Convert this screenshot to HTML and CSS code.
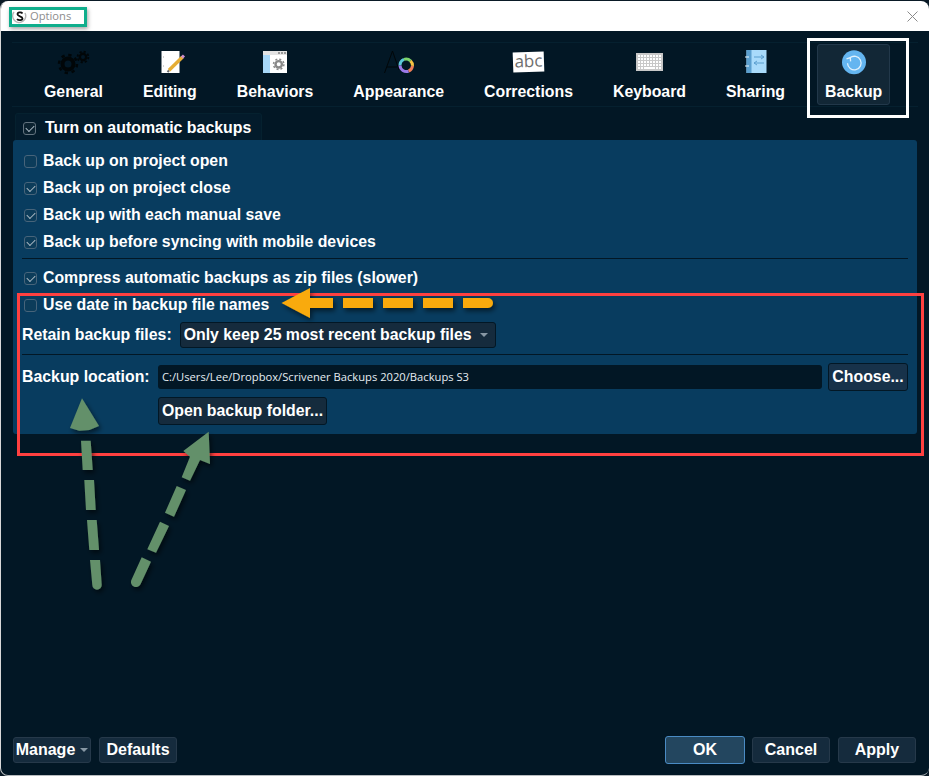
FILE: index.html
```html
<!DOCTYPE html>
<html lang="en">
<head>
<meta charset="utf-8">
<title>Options</title>
<link rel="stylesheet" href="styles.css">
</head>
<body>
<div class="window">
  <header class="titlebar">
    <svg class="app-icon" width="15" height="15" viewBox="0 0 15 15"><path d="M2 3a6.500 6.500 0 1 0 11 1" fill="none" stroke="#b5b5b5" stroke-width="1.500"/><path d="M10.500 4.500C9.500 3 5.500 3 5.500 5.300c0 2.300 5 1.700 5 4.200 0 2.100-4.200 2-5.500.7" fill="none" stroke="#111" stroke-width="1.800"/></svg>
    <span class="title">Options</span>
    <svg class="close" width="11" height="11" viewBox="0 0 11 11"><path d="M.5.5l10 10M10.500.5l-10 10" stroke="#8a8a8a" stroke-width="1" fill="none"/></svg>
  </header>
  <main class="content">
    <nav class="toolbar">
      <div class="tab">
        <svg class="tab-icon" width="40" height="30" viewBox="0 0 40 30">
          <g fill="none" stroke="#010608">
            <circle cx="14" cy="14" r="5.500" stroke-width="4"/>
            <circle cx="14" cy="14" r="9" stroke-width="2.400" stroke-dasharray="3.300 3.770"/>
            <circle cx="29" cy="7" r="3.200" stroke-width="2.400"/>
            <circle cx="29" cy="7" r="5.400" stroke-width="1.800" stroke-dasharray="2.200 2.040"/>
          </g>
        </svg>
        <span class="tab-label">General</span>
      </div>
      <div class="tab">
        <svg class="tab-icon" width="30" height="30" viewBox="0 0 30 30">
          <rect x="6.500" y="1" width="18" height="22" fill="#fff"/>
          <path d="M8 7h1M8 16h1" stroke="#aaa"/>
          <path d="M14 20.300L27.500 7" stroke="#e5ad35" stroke-width="3.400"/>
          <path d="M27 7.500l2-2" stroke="#cf8fd0" stroke-width="3"/>
          <path d="M12.500 22l1.500-1.500" stroke="#666" stroke-width="2"/>
        </svg>
        <span class="tab-label">Editing</span>
      </div>
      <div class="tab">
        <svg class="tab-icon" width="24" height="30" viewBox="0 0 24 30">
          <rect y="1" width="24" height="22" fill="#fff"/>
          <rect y="1" width="24" height="4" fill="#e3e3e3"/>
          <rect x="15" y="2" width="2" height="2" fill="#999"/><rect x="18" y="2" width="2" height="2" fill="#999"/><rect x="21" y="2" width="2" height="2" fill="#999"/>
          <rect y="5" width="7" height="18" fill="#a8d8f8"/>
          <circle cx="15.700" cy="14.300" r="3.200" fill="none" stroke="#8a8a8a" stroke-width="2.400"/>
          <circle cx="15.700" cy="14.300" r="5.200" fill="none" stroke="#8a8a8a" stroke-width="1.500" stroke-dasharray="2 2.080"/>
        </svg>
        <span class="tab-label">Behaviors</span>
      </div>
      <div class="tab">
        <svg class="tab-icon" width="34" height="30" viewBox="0 0 34 30">
          <path d="M2.500 23L10.500 1l6.500 19M5 17h10" fill="none" stroke="#010608" stroke-width="1"/>
          <g fill="none" stroke-width="3" transform="translate(-1 -5.500)">
            <path d="M19 21a6.500 6.500 0 0 1 4-6.100" stroke="#5bc8d8"/>
            <path d="M23 14.900a6.500 6.500 0 0 1 6.500 1.500" stroke="#7ed36a"/>
            <path d="M29.500 16.400a6.500 6.500 0 0 1 2 5" stroke="#f5c342"/>
            <path d="M31.500 21.400a6.500 6.500 0 0 1-4 5.300" stroke="#ef7d58"/>
            <path d="M27.500 26.700a6.500 6.500 0 0 1-8.500-5.700" stroke="#9c7ae8"/>
          </g>
        </svg>
        <span class="tab-label">Appearance</span>
      </div>
      <div class="tab">
        <span class="abc">abc</span>
        <span class="tab-label">Corrections</span>
      </div>
      <div class="tab">
        <svg class="tab-icon" width="27" height="30" viewBox="0 0 27 30">
          <rect y="3" width="27" height="18" fill="#c8c8c8"/>
          <g stroke="#fff" stroke-width="2" stroke-dasharray="2 1" fill="none">
            <path d="M2 6h23M2 9h23M2 12h23M2 15h23"/>
            <path d="M8 18h11" stroke-dasharray="none"/>
            <path d="M2 18h5M20 18h5"/>
          </g>
        </svg>
        <span class="tab-label">Keyboard</span>
      </div>
      <div class="tab">
        <svg class="tab-icon" width="22" height="30" viewBox="0 0 22 30">
          <rect x="1.500" y="0" width="20" height="23" fill="#a9dbfb"/>
          <rect x="1.500" y="0" width="5" height="23" fill="#5b9fcf"/>
          <path d="M0 7h4M0 16h4" stroke="#e8f4fb"/>
          <path d="M9 7h10M16 5l3 2-3 2M19 13H9M12 11l-3 2 3 2" fill="none" stroke="#5b9fcf"/>
        </svg>
        <span class="tab-label">Sharing</span>
      </div>
      <div class="tab tab-active">
        <svg class="tab-icon" width="24" height="30" viewBox="0 0 24 30">
          <circle cx="12" cy="12.300" r="12" fill="#64b5f0"/>
          <path d="M8 7.800A6.800 6.800 0 1 1 5.500 13.300" fill="none" stroke="#dff1fd" stroke-width="1.300"/>
          <path d="M4.500 8.800l3.800-1.200.3 3.800" fill="none" stroke="#dff1fd" stroke-width="1.300"/>
        </svg>
        <span class="tab-label">Backup</span>
      </div>
    </nav>

    <div class="legend">
      <span class="check check-on check-legend"></span>
      <span>Turn on automatic backups</span>
    </div>
    <section class="panel">
      <div class="row"><span class="check"></span><span>Back up on project open</span></div>
      <div class="row"><span class="check check-on"></span><span>Back up on project close</span></div>
      <div class="row"><span class="check check-on"></span><span>Back up with each manual save</span></div>
      <div class="row"><span class="check check-on"></span><span>Back up before syncing with mobile devices</span></div>
      <hr class="rule rule-first">
      <div class="row"><span class="check check-on"></span><span>Compress automatic backups as zip files (slower)</span></div>
      <div class="row"><span class="check"></span><span>Use date in backup file names</span></div>
      <div class="retain">
        <span>Retain backup files:</span>
        <span class="combo">Only keep 25 most recent backup files<span class="caret"></span></span>
      </div>
      <hr class="rule rule-second">
      <div class="location">
        <span class="location-label">Backup location:</span>
        <span class="path">C:/Users/Lee/Dropbox/Scrivener Backups 2020/Backups S3</span>
        <span class="btn btn-choose">Choose...</span>
      </div>
      <span class="btn btn-open">Open backup folder...</span>
    </section>

    <footer class="footer">
      <span class="btn btn-foot">Manage<span class="caret caret-small"></span></span>
      <span class="btn btn-foot btn-defaults">Defaults</span>
      <span class="footer-gap"></span>
      <span class="btn btn-foot btn-ok">OK</span>
      <span class="btn btn-foot">Cancel</span>
      <span class="btn btn-foot btn-apply">Apply</span>
    </footer>
  </main>

  <div class="mark mark-title"></div>
  <div class="mark mark-tab"></div>
  <div class="mark mark-red"></div>
  <svg class="arrows" width="929" height="776" viewBox="0 0 929 776">
    <defs>
      <filter id="sh" x="-20%" y="-20%" width="140%" height="140%"><feDropShadow dx="2" dy="3" stdDeviation="2.500" flood-color="#000" flood-opacity=".55"/></filter>
    </defs>
    <g filter="url(#sh)">
      <path d="M281.500 303L310 288V318Z" fill="#f9aa08"/>
      <path d="M310 298h23v10h-23zM343 298h30v10h-30zM383 298h30v10h-30zM423 298h30v10h-30zM463 298h25a5 5 0 0 1 0 10h-25z" fill="#f9aa08"/>
      <path d="M82 398.300L70 428l9.300 2.700 10-.7L99 426Z" fill="#64906a"/>
      <path d="M81 440.700h9.700l2 29.300h-10ZM84.300 480H94l1.700 30H86ZM87 520h9.700l2.300 30h-9.700ZM90 560h10l1.700 25a4.700 4.700 0 0 1-9.400 0Z" fill="#64906a"/>
      <path d="M208.700 431.700L183.300 451l6.700 5.700-8.300 20.600 8.300 3.400L200 460l10 4Z" fill="#64906a"/>
      <path d="M176.700 486l9.300 4L174 516.700l-9-4ZM160 521.700l9 4.300-13 26.700-8.700-3.400ZM141.700 557.300l9.300 4.400-10.500 22.500a5 5 0 0 1-9-4.400Z" fill="#64906a"/>
    </g>
  </svg>
</div>
</body>
</html>
```
FILE: styles.css
```css
* { box-sizing: border-box; }
html, body { margin: 0; padding: 0; }
body {
  width: 929px;
  height: 776px;
  background: #0a1a26;
  overflow: hidden;
  font-family: "Liberation Sans", Arial, sans-serif;
  font-weight: 700;
  font-size: 16px;
  color: #fff;
}
.window {
  position: relative;
  width: 929px;
  height: 775px;
  margin-top: 1px;
  display: flex;
  flex-direction: column;
  border-radius: 8px;
  overflow: hidden;
  background: #021725;
  border-left: 1px solid #d8d8d8;
  border-bottom: 1px solid #b8bcbf;
}
.titlebar {
  flex: none;
  height: 30px;
  background: #fff;
  display: flex;
  align-items: center;
  padding: 0 11px;
  gap: 3px;
}
.app-icon { flex: none; }
.title {
  font-family: "Open Sans", sans-serif;
  font-weight: 400;
  font-size: 11.200px;
  color: #8d8d8d;
  flex: 1;
  margin-top: -1px;
}
.close { flex: none; }
.content {
  flex: 1;
  display: flex;
  flex-direction: column;
  padding: 11px 11px 0;
  min-height: 0;
}
.toolbar {
  flex: none;
  height: 65px;
  display: flex;
  gap: 24px;
  padding: 1px 0 0 24px;
  border: 1px solid #05202f;
  border-width: 1px 0;
}
.tab {
  height: 61px;
  padding: 0 7px;
  display: flex;
  flex-direction: column;
  align-items: center;
  border: 1px solid transparent;
  border-radius: 3px;
}
.tab-active {
  background: #122736;
  border-color: #22384a;
}
.tab-icon {
  display: block;
  flex: none;
  height: 30px;
  margin-top: 5px;
}
.tab-label {
  margin-top: 3px;
  line-height: 18px;
  white-space: nowrap;
  font-size: 15.850px;
}
.abc {
  flex: none;
  display: block;
  width: 31px;
  height: 20px;
  margin-top: 7px;
  margin-bottom: 8px;
  background: #fff;
  color: #6e6e6e;
  font-family: "Open Sans", sans-serif;
  font-weight: 400;
  font-size: 17px;
  line-height: 18px;
  text-align: center;
  transform: rotate(-2deg);
}
.legend {
  flex: none;
  width: 247px;
  height: 27px;
  margin: 6px 0 0 3px;
  padding: 2px 0 0 7px;
  display: flex;
  align-items: center;
  gap: 9px;
  background: #031b2b;
  border: 1px solid #05212f;
  border-bottom: 0;
  border-radius: 3px 3px 0 0;
  font-size: 15.900px;
}
.panel {
  flex: none;
  height: 294px;
  width: 904px;
  margin-left: 1px;
  padding: 7px 9px 0;
  background: #083c5f;
  border-radius: 3px;
  display: flex;
  flex-direction: column;
  align-items: stretch;
  font-size: 15.850px;
}
.row {
  height: 27px;
  display: flex;
  align-items: center;
  gap: 6px;
  padding-left: 2px;
}
.check {
  position: relative;
  flex: none;
  width: 13px;
  height: 13px;
  border: 1px solid #47647a;
  border-radius: 3px;
  background: #0c3c5a;
  margin-top: 1px;
}
.check-on::after {
  content: "";
  position: absolute;
  left: 2px;
  top: 2px;
  width: 7px;
  height: 4px;
  border-left: 1.500px solid #a9b8c3;
  border-bottom: 1.500px solid #a9b8c3;
  transform: rotate(-45deg);
}
.check-legend {
  background: #0b2230;
  border-color: #62727e;
}
.rule {
  width: 100%;
  margin: 0;
  border: 0;
  border-top: 1px solid #021725;
}
.rule-first { margin: 3px 0 5px; }
.rule-second { margin: 7px 0 8px; }
.retain {
  margin-top: 4px;
  height: 25px;
  display: flex;
  align-items: center;
  gap: 8px;
}
.combo {
  width: 316px;
  height: 26px;
  padding: 0 0 0 3px;
  display: flex;
  align-items: center;
  justify-content: space-between;
  background: #152b3d;
  border: 1px solid #021725;
  border-radius: 3px;
  white-space: nowrap;
}
.caret {
  width: 0;
  height: 0;
  margin-right: 7px;
  margin-left: 4px;
  border: 4px solid transparent;
  border-top: 4px solid #8797a4;
  border-bottom: 0;
}
.caret-small { margin: 0 0 0 5px; }
.location {
  height: 28px;
  display: flex;
  align-items: center;
}
.location-label {
  width: 136px;
  flex: none;
  margin-top: -1px;
}
.path {
  flex: 1;
  height: 24px;
  margin-right: 6px;
  padding-left: 4px;
  background: #021725;
  border-radius: 3px;
  font-family: "Open Sans", sans-serif;
  font-weight: 400;
  font-size: 11.200px;
  line-height: 24px;
  color: #e6edf2;
  white-space: nowrap;
}
.btn {
  display: inline-flex;
  align-items: center;
  justify-content: center;
  background: #152b3d;
  border: 1px solid #26394a;
  border-radius: 3px;
  white-space: nowrap;
}
.btn-choose {
  flex: none;
  width: 80px;
  height: 28px;
  border-color: #021725;
  background: #17324a;
}
.btn-open {
  align-self: flex-start;
  width: 169px;
  height: 28px;
  margin: 6px 0 0 136px;
  border-color: #021725;
}
.footer {
  flex: none;
  margin-top: auto;
  height: 28px;
  margin-bottom: 11px;
  display: flex;
  align-items: center;
  gap: 7px;
  padding: 0 2px 0 1px;
}
.btn-foot {
  width: 78px;
  height: 26px;
}
.btn-defaults { margin-left: 1px; }
.btn-apply { margin-left: 1px; }
.footer-gap { flex: 1; }
.btn-ok {
  width: 80px;
  height: 28px;
  background: #23465f;
  border-color: #4a8bc4;
}
.mark {
  position: absolute;
  pointer-events: none;
}
.mark-title {
  left: 8px;
  top: 6px;
  width: 78px;
  height: 20px;
  border: 3px solid #0fae8c;
  box-shadow: 1px 2px 4px rgba(0, 0, 0, .35);
}
.mark-tab {
  left: 806px;
  top: 37px;
  width: 102px;
  height: 80px;
  border: 3px solid #fff;
}
.mark-red {
  left: 16px;
  top: 292px;
  width: 907px;
  height: 163px;
  border: 3px solid #ff4040;
}
.arrows {
  position: absolute;
  left: -1px;
  top: -1px;
  pointer-events: none;
}
```
